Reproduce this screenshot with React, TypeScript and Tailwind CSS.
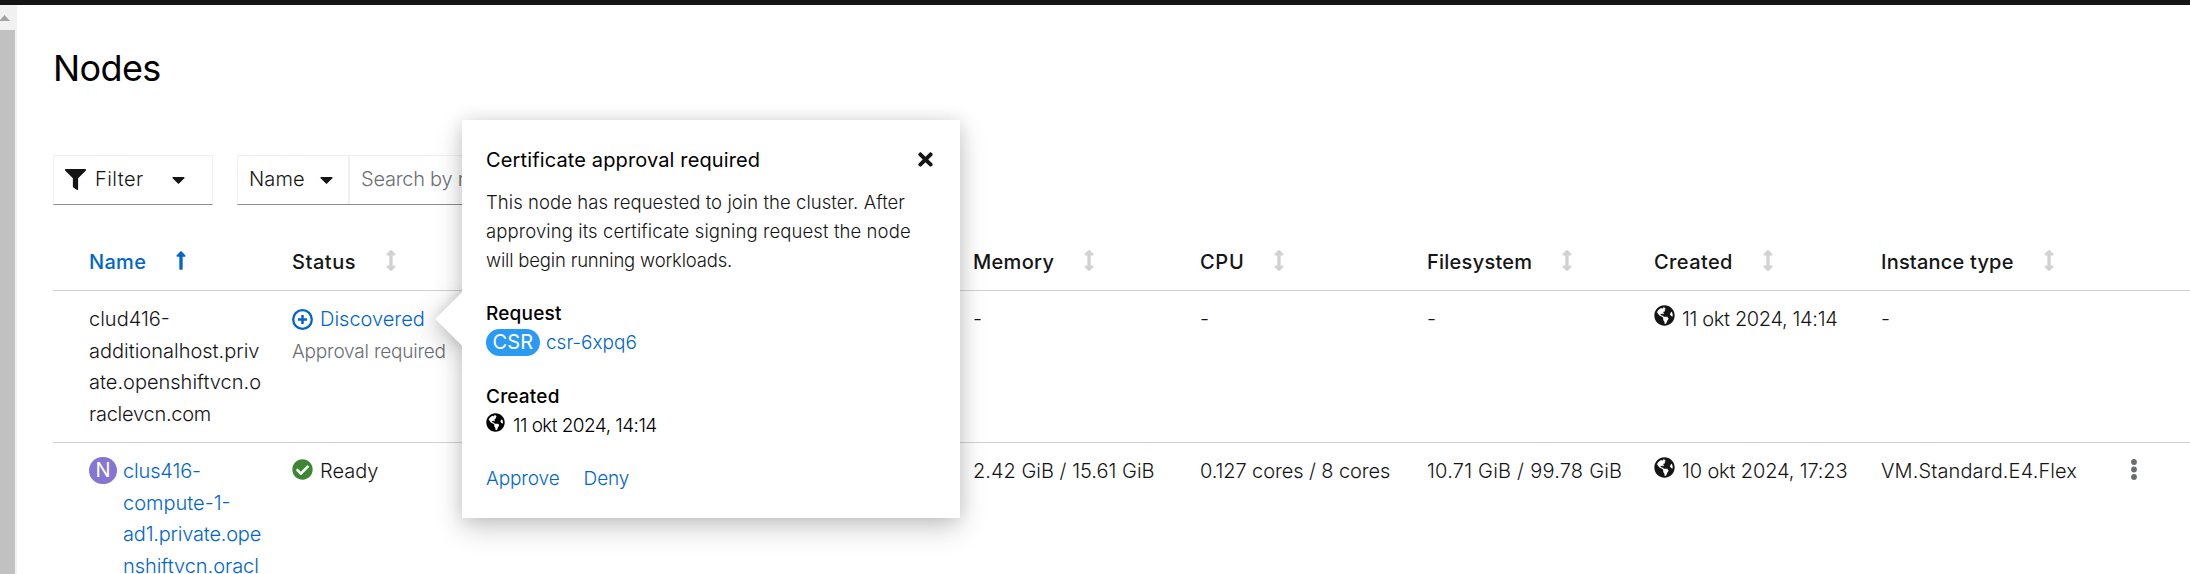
import type { ReactNode } from "react";
import {
  FaArrowsAltV,
  FaCaretDown,
  FaCheckCircle,
  FaFilter,
  FaGlobeAmericas,
  FaLongArrowAltUp,
  FaTimes,
} from "react-icons/fa";

function PlusCircleIcon() {
  return (
    <svg viewBox="0 0 21 21" className="size-[21px] shrink-0 text-[#0066cc]" fill="none" stroke="currentColor">
      <circle cx="10.5" cy="10.5" r="9.3" strokeWidth="2.3" />
      <path d="M10.5 6v9M6 10.5h9" strokeWidth="2.5" />
    </svg>
  );
}

function KebabIcon() {
  return (
    <svg viewBox="0 0 6 21" className="h-[21px] w-[6px] text-[#6a6e73]" fill="currentColor">
      <circle cx="3" cy="3" r="2.9" />
      <circle cx="3" cy="10.5" r="2.9" />
      <circle cx="3" cy="18" r="2.9" />
    </svg>
  );
}

function HeaderCell({ label, tracking, sorted = false }: { label: string; tracking: string; sorted?: boolean }) {
  return (
    <div className={`flex items-center gap-[29px] ${sorted ? "pl-9 text-[#0066cc]" : ""}`}>
      <span className={`font-medium ${tracking}`}>{label}</span>
      {sorted ? (
        <FaLongArrowAltUp className="mb-1 h-[21px] w-[12px]" />
      ) : (
        <FaArrowsAltV className="mb-1 h-[21px] w-[12px] text-[#d2d2d2]" />
      )}
    </div>
  );
}

function Timestamp({ children, tracking }: { children: ReactNode; tracking: string }) {
  return (
    <div className="flex">
      <FaGlobeAmericas className="mt-px size-[21px]" />
      <span className={`ml-[7px] ${tracking}`}>{children}</span>
    </div>
  );
}

const columns =
  "grid grid-cols-[239px_227px_227px_227px_227px_227px_227px_227px_240px_1fr] border-b border-[#d2d2d2]";

function Popover() {
  return (
    <section className="absolute top-[120px] left-[462px] h-[398px] w-[498px] shadow-[0_10px_26px_rgba(3,3,3,0.2),0_0_16px_rgba(3,3,3,0.1)]">
      <div className="absolute top-[180px] -left-[19px] size-[38px] rotate-45 bg-white shadow-[0_10px_26px_rgba(3,3,3,0.16),0_0_12px_rgba(3,3,3,0.1)]" />
      <div className="relative h-full bg-white px-6 pt-6 text-[18.5px] leading-[29px] text-black">
        <header className="flex items-start justify-between">
          <h2 className="text-[20px] leading-[32px] font-normal tracking-[0.13px]">Certificate approval required</h2>
          <FaTimes className="mt-[5px] size-[21px] text-[#151515]" />
        </header>
        <p className="mt-3 text-[#151515]">
          <span className="block tracking-[0.06px]">This node has requested to join the cluster. After</span>
          <span className="block tracking-[0.1px]">approving its certificate signing request the node</span>
          <span className="block tracking-[-0.18px]">will begin running workloads.</span>
        </p>
        <dl className="text-[19px]">
          <dt className="mt-6 font-medium tracking-[0.2px]">Request</dt>
          <dd className="flex items-center text-[#0066cc]">
            <span className="flex h-[27px] w-[54px] items-center justify-center rounded-full bg-[#2b9af3] text-[20px] font-normal tracking-[0.2px] text-white">
              CSR
            </span>
            <span className="ml-[6px]">csr-6xpq6</span>
          </dd>
          <dt className="mt-[25px] font-medium tracking-[0.2px]">Created</dt>
          <dd className="flex">
            <FaGlobeAmericas className="mt-[2px] size-[19px]" />
            <span className="ml-[8px] tracking-[-0.55px]">11 okt 2024, 14:14</span>
          </dd>
        </dl>
        <div className="mt-6 flex gap-6 text-[19px] tracking-[-0.1px] text-[#0066cc]">
          <a>Approve</a>
          <a>Deny</a>
        </div>
      </div>
    </section>
  );
}

export default function App() {
  return (
    <div className="relative flex h-[574px] w-full flex-col overflow-hidden bg-white font-['Inter',sans-serif] text-[20px] leading-[31.5px] font-light text-[#151515]">
      <div className="h-[5px] shrink-0 bg-[#151515]" />
      <div className="flex min-h-0 flex-1">
        <aside className="flex w-[17px] shrink-0 flex-col bg-[#f1f1f1]">
          <svg viewBox="0 0 17 25" className="h-[25px] w-[17px] shrink-0">
            <path d="M-1 16L4.5 10L10 16Z" fill="#a3a3a3" />
          </svg>
          <div className="w-[15px] flex-1 bg-[#c1c1c1]" />
        </aside>
        <main className="min-w-0 flex-1 pl-9">
          <h1 className="pt-[41px] text-[36px] leading-[44px] font-normal tracking-[-0.6px] text-black">Nodes</h1>
          <div className="mt-[65px] flex gap-6">
            <button className="flex h-[50px] w-[160px] items-center border border-b-[#8a8d90] border-[#f0f0f0] pl-[11px]">
              <FaFilter className="mb-px size-[21px]" />
              <span className="ml-[9px] tracking-[0.45px]">Filter</span>
              <FaCaretDown className="mb-px ml-[24px] size-[21px]" />
            </button>
            <div className="flex h-[50px] w-[500px] border border-b-[#8a8d90] border-[#f0f0f0]">
              <button className="flex w-[112px] items-center border-r-2 border-[#f0f0f0] pl-[11px]">
                <span className="tracking-[0.15px]">Name</span>
                <FaCaretDown className="mb-px ml-[11px] size-[21px]" />
              </button>
              <span className="self-center pl-[11px] tracking-[-0.25px] text-[#6a6e73]">Search by name...</span>
            </div>
          </div>
          <div className={`${columns} h-[86px] pt-[30px]`}>
            <HeaderCell label="Name" tracking="tracking-[0.3px]" sorted />
            <HeaderCell label="Status" tracking="tracking-[0.55px]" />
            <div />
            <div />
            <HeaderCell label="Memory" tracking="tracking-[0.3px]" />
            <HeaderCell label="CPU" tracking="tracking-[0.7px]" />
            <HeaderCell label="Filesystem" tracking="tracking-[0.25px]" />
            <HeaderCell label="Created" tracking="tracking-[0.4px]" />
            <HeaderCell label="Instance type" tracking="tracking-[0.2px]" />
          </div>
          <div className={`${columns} h-[152px] pt-[13px]`}>
            <div className="pl-9">
              <div>clud416-</div>
              <div>additionalhost.priv</div>
              <div>ate.openshiftvcn.o</div>
              <div className="tracking-[-0.25px]">raclevcn.com</div>
            </div>
            <div>
              <div className="flex items-center gap-[7px] text-[#0066cc]">
                <PlusCircleIcon />
                <span>Discovered</span>
              </div>
              <div className="text-[19px] tracking-[-0.2px] text-[#6a6e73]">Approval required</div>
            </div>
            <div />
            <div />
            <div>-</div>
            <div>-</div>
            <div>-</div>
            <Timestamp tracking="tracking-[-0.35px]">11 okt 2024, 14:14</Timestamp>
            <div>-</div>
          </div>
          <div className={`${columns} h-[152px] pt-[13px]`}>
            <div className="flex gap-[6px] pl-9">
              <span className="mt-px flex h-[27px] w-[28px] items-center justify-center rounded-full bg-[#8476d1] font-normal text-white">
                N
              </span>
              <div className="text-[#0066cc]">
                <div className="tracking-[-0.15px]">clus416-</div>
                <div>compute-1-</div>
                <div className="tracking-[-0.2px]">ad1.private.ope</div>
                <div className="tracking-[-0.05px]">nshiftvcn.oracl</div>
              </div>
            </div>
            <div className="flex items-start gap-[7px]">
              <FaCheckCircle className="mt-[3px] size-[21px] text-[#3e8635]" />
              <span>Ready</span>
            </div>
            <div />
            <div />
            <div>2.42 GiB / 15.61 GiB</div>
            <div className="tracking-[-0.1px]">0.127 cores / 8 cores</div>
            <div className="tracking-[0.22px]">10.71 GiB / 99.78 GiB</div>
            <Timestamp tracking="tracking-[-0.15px]">10 okt 2024, 17:23</Timestamp>
            <div className="tracking-[0.12px]">VM.Standard.E4.Flex</div>
            <div className="pt-[3px] pl-[10px]">
              <KebabIcon />
            </div>
          </div>
        </main>
      </div>
      <Popover />
    </div>
  );
}
